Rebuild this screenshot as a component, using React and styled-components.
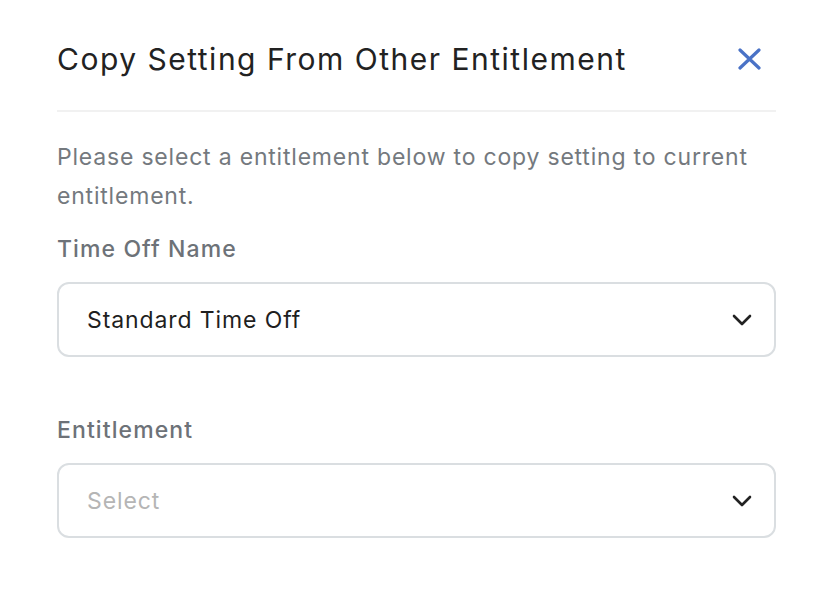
import React from "react";
import styled, { createGlobalStyle } from "styled-components";

const GlobalStyle = createGlobalStyle`
  html, body { margin: 0; padding: 0; background: #ffffff; }
  body { font-family: "Inter", "Noto Sans", sans-serif; -webkit-font-smoothing: antialiased; }
  * { box-sizing: border-box; }
`;

const Panel = styled.div`
  width: 836px;
  min-height: 614px;
  background: #ffffff;
  padding: 38px 60px 0 57px;
  display: flex;
  flex-direction: column;
`;

const Header = styled.div`
  display: flex;
  align-items: center;
  justify-content: space-between;
  padding: 0 15px 30px 0;
  border-bottom: 2px solid #f1f1f1;
`;

const Title = styled.h1`
  margin: 0;
  font-size: 30px;
  line-height: 42px;
  font-weight: 400;
  letter-spacing: 1.5px;
  color: #222222;
`;

const CloseButton = styled.button`
  display: flex;
  align-items: center;
  justify-content: center;
  padding: 0;
  border: none;
  background: none;
  width: 23px;
  height: 23px;
  cursor: pointer;
`;

const Description = styled.p`
  margin: 26px 0 0;
  font-size: 23px;
  line-height: 39px;
  letter-spacing: 0.8px;
  color: #74797e;
`;

const Field = styled.div`
  display: flex;
  flex-direction: column;
  gap: 17px;
  margin-top: ${(p) => p.$top}px;
`;

const Label = styled.label`
  font-size: 23px;
  line-height: 32px;
  font-weight: 500;
  letter-spacing: 1.1px;
  color: #6d7278;
`;

const SelectBox = styled.div`
  height: 75px;
  border: 2px solid #dadee1;
  border-radius: 12px;
  display: flex;
  align-items: center;
  justify-content: space-between;
  padding: 0 22px 0 28px;
  font-size: 23px;
  letter-spacing: 0.9px;
  color: ${(p) => (p.$placeholder ? "#b5b5b5" : "#1f1f1f")};
`;

const Chevron = () => (
  <svg width="20" height="12" viewBox="0 0 20 12" fill="none">
    <path d="M2 2l8 8 8-8" stroke="#222" strokeWidth="2.6" strokeLinecap="round" strokeLinejoin="round" />
  </svg>
);

const CloseIcon = () => (
  <svg width="23" height="22" viewBox="0 0 23 22" fill="none">
    <path d="M2 2l19 18M21 2L2 20" stroke="#4a72c6" strokeWidth="3.2" strokeLinecap="round" />
  </svg>
);

export default function App() {
  return (
    <>
      <GlobalStyle />
      <Panel>
        <Header>
          <Title>Copy Setting From Other Entitlement</Title>
          <CloseButton aria-label="Close">
            <CloseIcon />
          </CloseButton>
        </Header>
        <Description>
          Please select a entitlement below to copy setting to current entitlement.
        </Description>
        <Field $top={17}>
          <Label>Time Off Name</Label>
          <SelectBox>
            <span>Standard Time Off</span>
            <Chevron />
          </SelectBox>
        </Field>
        <Field $top={57}>
          <Label>Entitlement</Label>
          <SelectBox $placeholder>
            <span>Select</span>
            <Chevron />
          </SelectBox>
        </Field>
      </Panel>
    </>
  );
}
